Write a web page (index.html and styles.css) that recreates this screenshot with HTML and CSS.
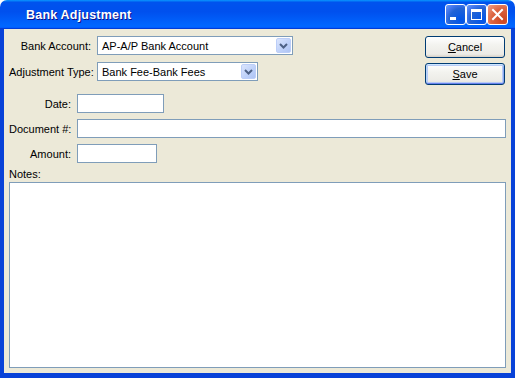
FILE: index.html
```html
<!DOCTYPE html>
<html lang="en">
<head>
  <meta charset="UTF-8">
  <meta name="viewport" content="width=device-width, initial-scale=1.0">
  <title>Bank Adjustment</title>
  <link rel="stylesheet" href="styles.css">
</head>
<body>
  <div class="window">
    <!-- Title bar -->
    <div class="titlebar">
      <span class="title">Bank Adjustment</span>
      <div class="controls">
        <span class="ctl">
          <svg width="19" height="19" viewBox="0 0 19 19"><rect x="4" y="12" width="6" height="3" fill="#fff"/></svg>
        </span>
        <span class="ctl">
          <svg width="19" height="19" viewBox="0 0 19 19"><rect x="4.5" y="4.5" width="10" height="10" fill="none" stroke="#fff" stroke-width="1"/><rect x="4" y="4" width="11" height="3" fill="#fff"/></svg>
        </span>
        <span class="ctl close">
          <svg width="19" height="19" viewBox="0 0 19 19"><path d="M5 5 L14 14 M14 5 L5 14" stroke="#fff" stroke-width="2" stroke-linecap="square"/></svg>
        </span>
      </div>
    </div>

    <div class="frame">
      <div class="top">
        <div class="combos">
          <label>Bank Account:</label>
          <div class="combo wide">
            <span class="value">AP-A/P Bank Account</span>
            <span class="arrow"><svg width="9" height="6" viewBox="0 0 9 6"><path d="M1 1 L4.5 4.5 L8 1" fill="none" stroke="#4d6185" stroke-width="2"/></svg></span>
          </div>
          <label>Adjustment Type:</label>
          <div class="combo narrow">
            <span class="value">Bank Fee-Bank Fees</span>
            <span class="arrow"><svg width="9" height="6" viewBox="0 0 9 6"><path d="M1 1 L4.5 4.5 L8 1" fill="none" stroke="#4d6185" stroke-width="2"/></svg></span>
          </div>
        </div>
        <div class="buttons">
          <button class="btn"><u>C</u>ancel</button>
          <button class="btn default"><u>S</u>ave</button>
        </div>
      </div>

      <div class="fields">
        <label>Date:</label>
        <div class="input date"></div>
        <label>Document #:</label>
        <div class="input"></div>
        <label>Amount:</label>
        <div class="input amount"></div>
      </div>

      <div class="notes-label">Notes:</div>
      <div class="notes"></div>
    </div>
  </div>
</body>
</html>
```

FILE: styles.css
```css
* {
  margin: 0;
  padding: 0;
  box-sizing: border-box;
}

body {
  background: #fff;
  font-family: 'Liberation Sans', Arial, sans-serif;
  font-size: 11px;
  color: #000;
}

.window {
  width: 515px;
  height: 378px;
  display: flex;
  flex-direction: column;
}

/* Title bar */
.titlebar {
  height: 29px;
  flex-shrink: 0;
  display: flex;
  align-items: center;
  padding: 0 7px 0 26px;
  border-radius: 7px 7px 0 0;
  background: linear-gradient(to bottom, #0997ff, #0053ee 8%, #0050ee 40%, #06f 88%, #06f 93%, #005bff 95%, #003dd7 96%, #003dd7);
}

.title {
  color: #fff;
  font-weight: bold;
  font-size: 12.5px;
  letter-spacing: 0.2px;
  text-shadow: 1px 1px #0f1089;
  padding-top: 1px;
}

.controls {
  margin-left: auto;
  display: flex;
}

.ctl {
  width: 21px;
  height: 21px;
  border: 1px solid #fff;
  border-radius: 3px;
  background: radial-gradient(circle at 80% 80%, #0054e9, #2263d5 55%, #4477ee 75%, #6b9cf8);
  display: flex;
}

.ctl.close {
  background: radial-gradient(circle at 80% 80%, #cc4520, #dc6542 55%, #e58060 75%, #f0a08a);
}

/* Dialog body */
.frame {
  flex: 1;
  display: flex;
  flex-direction: column;
  background: #ece9d8;
  border: 4px solid #0842d8;
  border-top: none;
  border-bottom-width: 5px;
  padding: 7px 5px 5px;
}

.top {
  display: flex;
  align-items: flex-start;
}

.combos {
  display: grid;
  grid-template-columns: 82px auto;
  grid-auto-rows: 19px;
  column-gap: 6px;
  row-gap: 7px;
  align-items: center;
}

label {
  text-align: right;
  white-space: nowrap;
}

.combo {
  height: 19px;
  display: flex;
  align-items: center;
  background: #fff;
  border: 1px solid #7f9db9;
  padding: 1px;
}

.combo.wide {
  width: 196px;
}

.combo.narrow {
  width: 161px;
}

.combo .value {
  flex: 1;
  padding-left: 3px;
}

.combo .arrow {
  width: 15px;
  height: 15px;
  display: flex;
  align-items: center;
  justify-content: center;
  border: 1px solid #bccef8;
  border-radius: 2px;
  background: linear-gradient(135deg, #dbe5fd, #bdd0f9 60%, #aec4f4);
}

.buttons {
  margin-left: auto;
  margin-right: 1px;
  display: flex;
  flex-direction: column;
  gap: 5px;
}

.btn {
  width: 80px;
  height: 22px;
  font-family: 'Liberation Sans', Arial, sans-serif;
  font-size: 11px;
  color: #000;
  border: 1px solid #003c74;
  border-radius: 3px;
  background: linear-gradient(to bottom, #fff, #f3f3ef 40%, #ecebe6 86%, #d6d0c5);
}

.btn.default {
  box-shadow: inset 0 1px #cee7ff, inset 0 -1px #6982ee, inset 1px 0 #b8d4f8, inset -1px 0 #8aa8f0, inset 0 0 0 2px #b8ccf6;
}

/* Lower fields */
.fields {
  margin-top: 9px;
  display: grid;
  grid-template-columns: 62px 1fr;
  grid-auto-rows: 19px;
  column-gap: 6px;
  row-gap: 6px;
  align-items: center;
}

.input {
  height: 19px;
  background: #fff;
  border: 1px solid #7f9db9;
}

.input.date {
  width: 87px;
}

.input.amount {
  width: 80px;
}

.notes-label {
  margin-top: 5px;
  line-height: 13px;
  margin-bottom: 1px;
}

.notes {
  flex: 1;
  background: #fff;
  border: 1px solid #7f9db9;
}
```
